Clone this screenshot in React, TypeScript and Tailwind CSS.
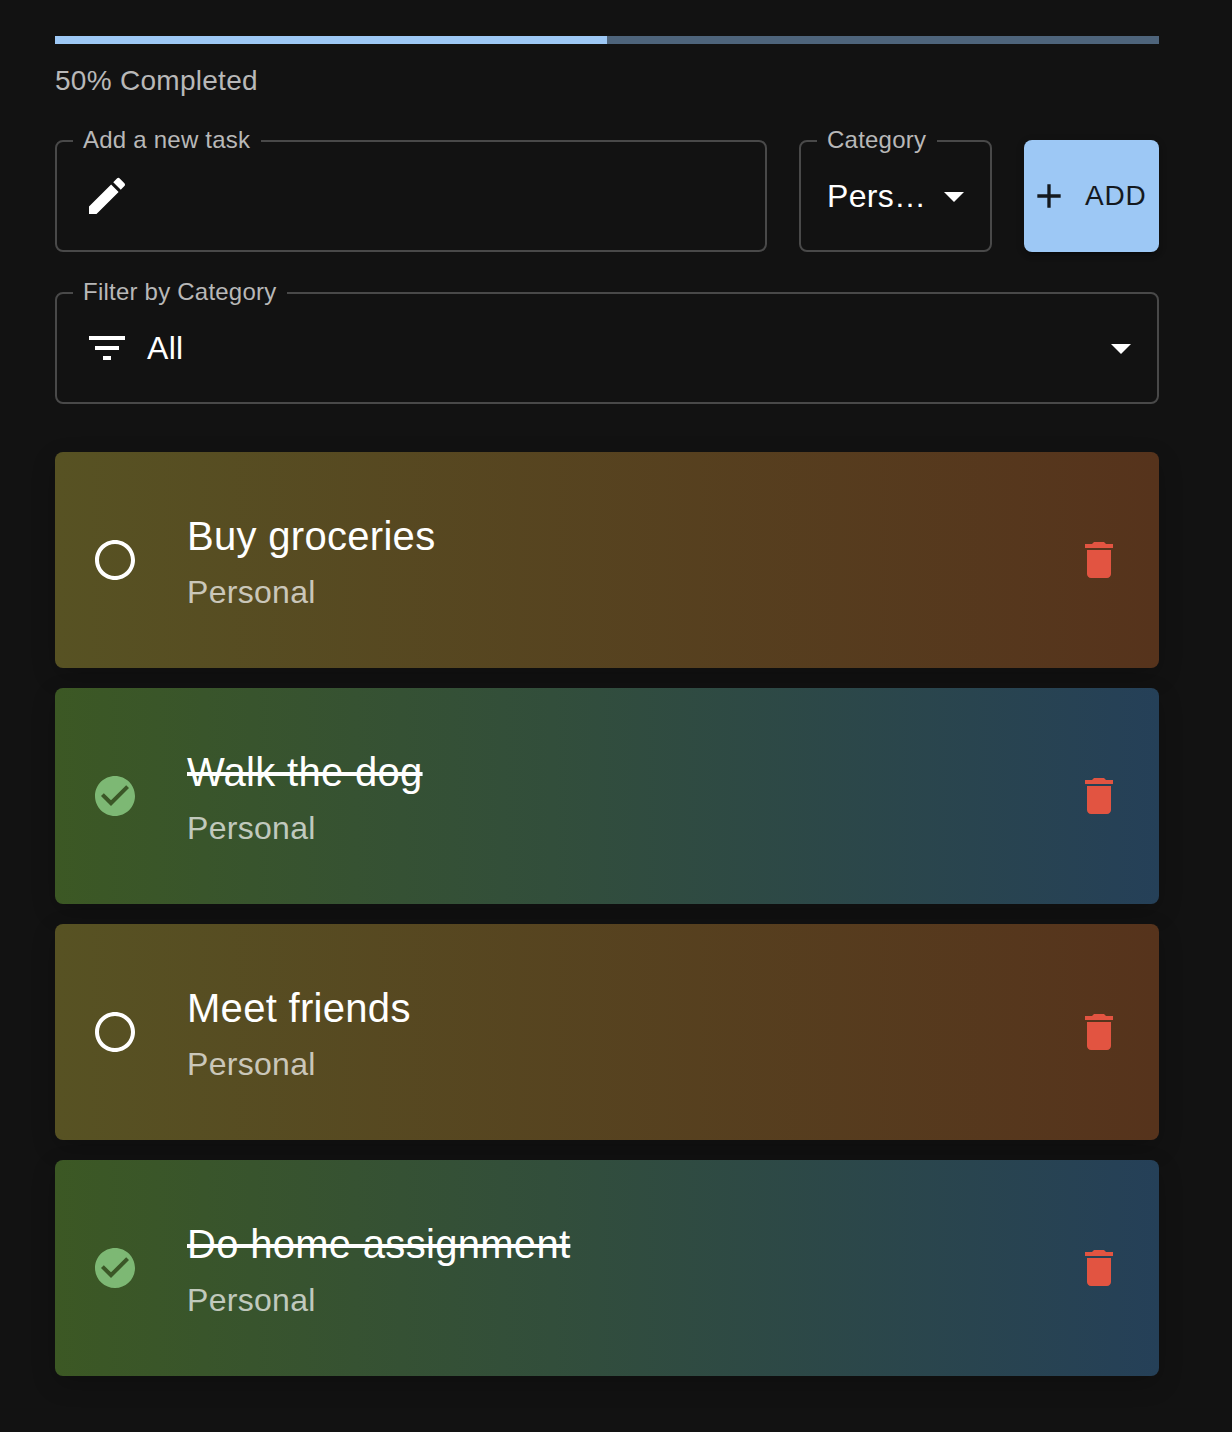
import React from "react";

const PATHS = {
  edit: "M3 17.25V21h3.75L17.81 9.94l-3.75-3.75zM20.71 7.04c.39-.39.39-1.02 0-1.41l-2.34-2.34a.9959.9959 0 0 0-1.41 0l-1.83 1.83 3.75 3.75z",
  filter: "M10 18h4v-2h-4zM3 6v2h18V6zm3 7h12v-2H6z",
  caret: "m7 10 5 5 5-5z",
  plus: "M19 13h-6v6h-2v-6H5v-2h6V5h2v6h6z",
  trash: "M6 19c0 1.1.9 2 2 2h8c1.1 0 2-.9 2-2V7H6zM19 4h-3.5l-1-1h-5l-1 1H5v2h14z",
  circle: "M12 2C6.48 2 2 6.48 2 12s4.48 10 10 10 10-4.48 10-10S17.52 2 12 2m0 18c-4.42 0-8-3.58-8-8s3.58-8 8-8 8 3.58 8 8-3.58 8-8 8",
  check: "M12 2C6.48 2 2 6.48 2 12s4.48 10 10 10 10-4.48 10-10S17.52 2 12 2m-2 15-5-5 1.41-1.41L10 14.17l7.59-7.59L19 8z",
};

function Icon({ name, className = "size-12" }: { name: keyof typeof PATHS; className?: string }) {
  return (
    <svg viewBox="0 0 24 24" fill="currentColor" aria-hidden="true" className={`shrink-0 ${className}`}>
      <path d={PATHS[name]} />
    </svg>
  );
}

function Field({ label, className, children }: { label: string; className: string; children: React.ReactNode }) {
  return (
    <fieldset className={`h-28 min-w-0 rounded-lg border-2 border-[#494949] ${className}`}>
      <legend className="ml-4 h-0.5 whitespace-nowrap pr-[11px] pl-2.5 text-2xl leading-[0px] tracking-[0.225px] text-[#b8b8b8]">
        {label}
      </legend>
      <div className="flex h-[108px] items-center text-[32px] tracking-[0.3px]">{children}</div>
    </fieldset>
  );
}

const tasks = [
  { title: "Buy groceries", category: "Personal", done: false },
  { title: "Walk the dog", category: "Personal", done: true },
  { title: "Meet friends", category: "Personal", done: false },
  { title: "Do home assignment", category: "Personal", done: true },
];

export default function App() {
  return (
    <main className="min-h-[1432px] bg-[#121212] pt-9 pr-[73px] pl-[55px] font-['Liberation_Sans',Arial,sans-serif] text-white">
      <div className="h-2 bg-[#4e647b]">
        <div className="h-full w-1/2 bg-[#9dc8f5]" />
      </div>
      <p className="mt-[17px] text-[28px] leading-10 tracking-[0.28px] text-[#b8b8b8]">50% Completed</p>

      <div className="mt-[39px] flex">
        <Field label="Add a new task" className="w-[712px]">
          <span className="ml-[26px]"><Icon name="edit" /></span>
        </Field>
        <Field label="Category" className="ml-8 w-[193px]">
          <span className="ml-[26px] w-[101px] whitespace-nowrap leading-[46px]">Pers…</span>
          <span className="ml-0.5"><Icon name="caret" /></span>
        </Field>
        <button className="ml-8 flex h-28 w-[135px] items-center gap-4 rounded-lg bg-[#9dc8f5] pl-[5px] text-[28px] tracking-[0.8px] text-[#14191e] shadow-[0_6px_2px_-4px_rgba(0,0,0,0.2),0_4px_4px_rgba(0,0,0,0.14),0_2px_10px_rgba(0,0,0,0.12)]">
          <Icon name="plus" className="size-10" />
          ADD
        </button>
      </div>

      <div className="mt-10">
        <Field label="Filter by Category" className="w-full">
          <span className="ml-[26px]"><Icon name="filter" /></span>
          <span className="ml-4 flex-1 leading-[46px]">All</span>
          <span className="mr-3"><Icon name="caret" /></span>
        </Field>
      </div>

      <ul className="mt-12 flex flex-col gap-5">
        {tasks.map((task) => (
          <li
            key={task.title}
            className={`flex h-54 items-center rounded-lg px-9 shadow-[0_8px_24px_rgba(0,0,0,0.2)] ${
              task.done
                ? "bg-[linear-gradient(to_right,#3c5824,#324e3b_45%,#254058)]"
                : "bg-[linear-gradient(to_right,#575223,#56331c)]"
            }`}
          >
            <span className={task.done ? "text-[#7db874]" : "text-white"}>
              <Icon name={task.done ? "check" : "circle"} />
            </span>
            <div className="ml-12 flex-1">
              <h2 className={`text-[40px] leading-16 tracking-[0.3px] ${task.done ? "line-through decoration-4" : ""}`}>
                {task.title}
              </h2>
              <p className="text-[32px] leading-12 tracking-[0.3px] text-white/70">{task.category}</p>
            </div>
            <button aria-label="Delete task" className="text-[#e25441]"><Icon name="trash" /></button>
          </li>
        ))}
      </ul>
    </main>
  );
}
